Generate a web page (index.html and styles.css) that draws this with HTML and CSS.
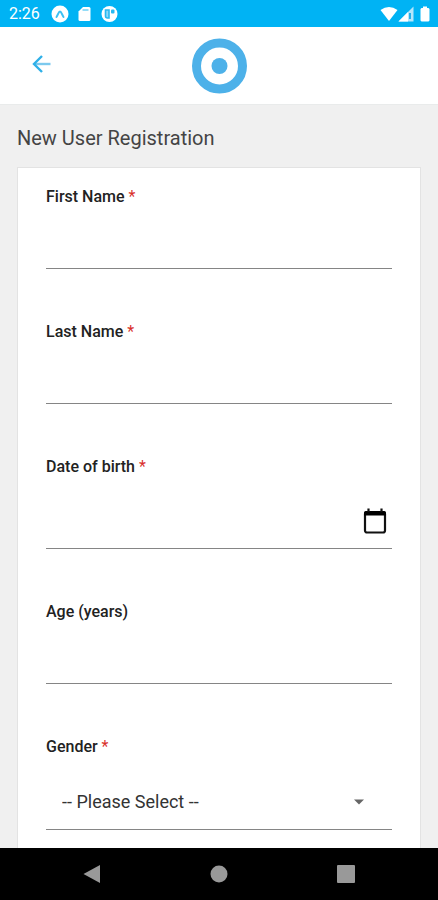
FILE: index.html
```html
<!DOCTYPE html>
<html lang="en">
<head>
<meta charset="utf-8">
<meta name="viewport" content="width=device-width, initial-scale=1">
<title>New User Registration</title>
<link rel="stylesheet" href="styles.css">
</head>
<body>
<div class="screen">
  <div class="status">
    <time class="clock">2:26</time>
    <svg class="status-icon" width="18" height="18" viewBox="0 0 18 18" aria-hidden="true">
      <circle cx="9" cy="9" r="8.5" fill="#fff"/>
      <path d="M5.500 12 C7 10 7.600 6.500 9 6.500 C10.400 6.500 11 10 12.500 12" fill="none" stroke="#3cc0f3" stroke-width="2" stroke-linecap="round"/>
    </svg>
    <svg class="status-icon" width="18" height="18" viewBox="0 0 18 18" aria-hidden="true">
      <path d="M7 2 H13 a1.500 1.500 0 0 1 1.500 1.500 V14.500 A1.500 1.500 0 0 1 13 16 H4 a1.500 1.500 0 0 1 -1.500 -1.500 V6.500 Z" fill="#fff"/>
      <path d="M6.500 5 H12.500" stroke="#6fd0f6" stroke-width="1.500"/>
    </svg>
    <svg class="status-icon" width="18" height="18" viewBox="0 0 18 18" aria-hidden="true">
      <circle cx="8.500" cy="9" r="8" fill="#fff"/>
      <path d="M4.500 5 H8 V13 H6.500 A2 2 0 0 1 4.500 11 Z" fill="#8fd9f8" stroke="#27b9f1" stroke-width="1.600"/>
      <rect x="10" y="4.500" width="3.500" height="4" rx="1" fill="#27b9f1"/>
    </svg>
    <div class="signals">
      <svg width="18" height="16" viewBox="0 0 18 16" aria-hidden="true">
        <path d="M0.500 4 Q9 -2 17.500 4 L9 15 Z" fill="#fff"/>
      </svg>
      <svg width="16" height="16" viewBox="0 0 16 16" aria-hidden="true">
        <path d="M15.500 0.500 V15.500 H0.500 Z" fill="#b5e6fb"/>
        <path d="M10 6 V15.500 H0.500 Z" fill="#fff"/>
        <path d="M12 7 V13" stroke="#00a4e6" stroke-width="1.600"/>
      </svg>
      <svg class="battery" width="10" height="16" viewBox="0 0 10 16" aria-hidden="true">
        <path d="M3 0.500 H7 V2 H8.500 L9.500 3 V14.500 L8.500 15.500 H1.500 L0.500 14.500 V3 L1.500 2 H3 Z" fill="#fff"/>
      </svg>
    </div>
  </div>

  <header class="header">
    <button class="back" type="button" aria-label="Back">
      <svg width="20" height="20" viewBox="0 0 20 20" aria-hidden="true">
        <path d="M18.500 10 H3" fill="none" stroke="#7cc9ee" stroke-width="2.400"/>
        <path d="M10 2 L2 10 L10 18" fill="none" stroke="#2fb0e8" stroke-width="2.400"/>
      </svg>
    </button>
    <svg class="logo" width="56" height="56" viewBox="0 0 56 56" aria-hidden="true">
      <circle cx="28.500" cy="28" r="23" fill="none" stroke="#4db1e9" stroke-width="9"/>
      <circle cx="28.500" cy="28" r="8" fill="#4db1e9"/>
    </svg>
  </header>

  <main class="content">
    <h1 class="title">New User Registration</h1>
    <form class="card">
      <div class="field">
        <label for="first">First Name <span class="required">*</span></label>
        <input class="control" id="first" type="text" required>
      </div>
      <div class="field">
        <label for="last">Last Name <span class="required">*</span></label>
        <input class="control" id="last" type="text" required>
      </div>
      <div class="field">
        <label for="birth">Date of birth <span class="required">*</span></label>
        <div class="control date">
          <input class="date-input" id="birth" type="text" required>
          <button class="picker" type="button" aria-label="Choose date">
            <svg width="24" height="26" viewBox="0 0 24 26" aria-hidden="true">
              <rect x="2" y="4" width="20" height="20.500" rx="2" fill="none" stroke="#111" stroke-width="2.200"/>
              <path d="M1 7.500 V5 a2 2 0 0 1 2 -2 H21 a2 2 0 0 1 2 2 V7.500 Z" fill="#000"/>
              <path d="M5.500 0.500 V4 M18.500 0.500 V4" stroke="#111" stroke-width="2.200"/>
            </svg>
          </button>
        </div>
      </div>
      <div class="field">
        <label for="age">Age (years)</label>
        <input class="control" id="age" type="text" inputmode="numeric">
      </div>
      <div class="field">
        <label for="gender">Gender <span class="required">*</span></label>
        <div class="control choice">
          <select class="select" id="gender" required>
            <option value="">-- Please Select --</option>
            <option>Female</option>
            <option>Male</option>
          </select>
          <svg class="caret" width="10" height="6" viewBox="0 0 10 6" aria-hidden="true">
            <path d="M0 0.500 H10 L5 5.500 Z" fill="#666"/>
          </svg>
        </div>
      </div>
    </form>
  </main>

  <nav class="navbar" aria-label="System">
    <button type="button" aria-label="Back">
      <svg width="18" height="20" viewBox="0 0 18 20" aria-hidden="true"><path d="M0.500 10 L17 1 V19 Z" fill="#999"/></svg>
    </button>
    <button type="button" aria-label="Home">
      <svg width="18" height="18" viewBox="0 0 18 18" aria-hidden="true"><circle cx="9" cy="9" r="8.500" fill="#999"/></svg>
    </button>
    <button type="button" aria-label="Recent apps">
      <svg width="18" height="18" viewBox="0 0 18 18" aria-hidden="true"><rect width="18" height="18" rx="1" fill="#999"/></svg>
    </button>
  </nav>
</div>
</body>
</html>
```
FILE: styles.css
```css
* {
  box-sizing: border-box;
}

body {
  margin: 0;
  background: #f0f0f0;
  color: #222;
  font-family: Roboto, "Liberation Sans", sans-serif;
}

button,
input,
select {
  margin: 0;
  padding: 0;
  border: 0;
  border-radius: 0;
  background: none;
  color: inherit;
  font: inherit;
}

svg {
  display: block;
}

.screen {
  display: flex;
  flex-direction: column;
  height: 100vh;
}

.status {
  display: flex;
  flex: none;
  align-items: center;
  gap: 7px;
  padding: 4px 8px 4px 9px;
  background: #00b3f4;
  color: #fff;
  font-size: 16px;
  line-height: 19px;
}

.clock {
  margin-right: 4px;
}

.signals {
  display: flex;
  align-items: center;
  margin-left: auto;
}

.battery {
  margin-left: 6px;
}

.header {
  display: grid;
  flex: none;
  grid-template-columns: 1fr auto 1fr;
  align-items: center;
  padding: 11px 32px 10px;
  border-bottom: 1px solid #e9ebeb;
  background: #fff;
}

.back {
  justify-self: start;
  margin-bottom: 4px;
}

.content {
  flex: 1;
  min-height: 0;
  overflow: hidden;
  padding: 20px 17px 0;
}

.title {
  margin: 0 0 15px;
  color: #444;
  font-size: 20px;
  font-weight: 400;
  line-height: 27px;
}

.card {
  display: flex;
  flex-direction: column;
  gap: 53px;
  padding: 19px 28px 32px;
  border: 1px solid #e3e3e3;
  background: #fff;
}

.field {
  display: flex;
  flex-direction: column;
}

label {
  font-size: 16px;
  font-weight: 500;
  line-height: 20px;
}

.required {
  color: #d9302c;
  font-weight: 400;
}

.control {
  width: 100%;
  height: 62px;
  border-bottom: 1px solid #858585;
}

.date {
  display: flex;
  align-items: center;
  height: 72px;
  padding: 17px 5px 0 0;
}

.date-input {
  flex: 1;
  min-width: 0;
}

.choice {
  display: flex;
  align-items: center;
  height: 73px;
  padding: 17px 28px 0 16px;
}

.select {
  flex: 1;
  min-width: 0;
  color: #333;
  font-size: 18px;
  line-height: 24px;
  appearance: none;
}

.navbar {
  display: flex;
  flex: none;
  align-items: center;
  justify-content: space-around;
  height: 52px;
  padding: 0 29px;
  background: #000;
}
```
